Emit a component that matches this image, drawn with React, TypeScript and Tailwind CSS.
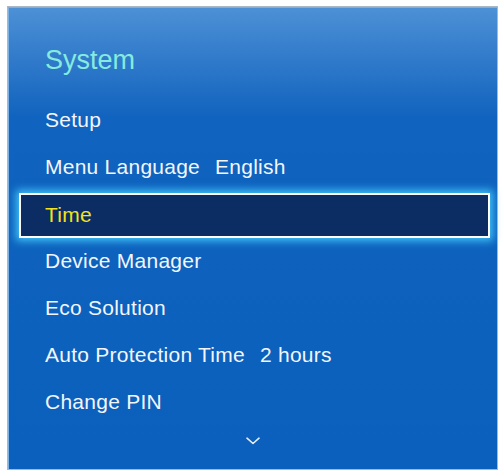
import React from "react";

const rows = [
  { label: "Setup" },
  { label: "Menu Language", value: "English" },
  { label: "Time", selected: true },
  { label: "Device Manager" },
  { label: "Eco Solution" },
  { label: "Auto Protection Time", value: "2 hours" },
  { label: "Change PIN" },
];

export default function App() {
  return (
    <div
      className="w-[504px] h-[473px] bg-white pt-[6px] pl-[7px] overflow-hidden"
      style={{ fontFamily: '"Liberation Sans", Arial, sans-serif' }}
    >
      <div className="w-[491px] h-[464px] border border-[#a9b7c6] bg-[linear-gradient(180deg,#4d91d6_0%,#2f79ca_12%,#1063be_24%,#0a60bc_100%)] shadow-[inset_1px_1px_0_#7fb0e2]">
        <div className="mt-[37px] pl-[37px] h-[32px] leading-[32px] text-[27px] text-[#86eadf]">
          System
        </div>
        <div className="mt-[20px] tracking-[0.25px]">
          {rows.map((r) =>
            r.selected ? (
              <div key={r.label} className="h-[47px] flex items-center">
                <div className="ml-[11px] mr-[7px] mt-[3px] flex-1 h-[45px] border-2 border-white bg-[#0b2d63] shadow-[0_0_8px_3px_rgba(70,205,255,0.9)] flex items-center pl-[24px] text-[21px] text-[#f3e21c]">
                  {r.label}
                </div>
              </div>
            ) : (
              <div
                key={r.label}
                className="h-[47px] flex items-center pl-[37px] text-[21px] text-[#f2f6fb]"
              >
                <span>{r.label}</span>
                {r.value && <span className="ml-[15px]">{r.value}</span>}
              </div>
            )
          )}
        </div>
        <div className="flex justify-center mt-[12px]">
          <svg width="14" height="8" viewBox="0 0 14 8" fill="none">
            <path d="M1 1.2 L7 6.5 L13 1.2" stroke="#e6eef8" strokeWidth="1.6" strokeLinecap="round" strokeLinejoin="round" />
          </svg>
        </div>
      </div>
    </div>
  );
}
